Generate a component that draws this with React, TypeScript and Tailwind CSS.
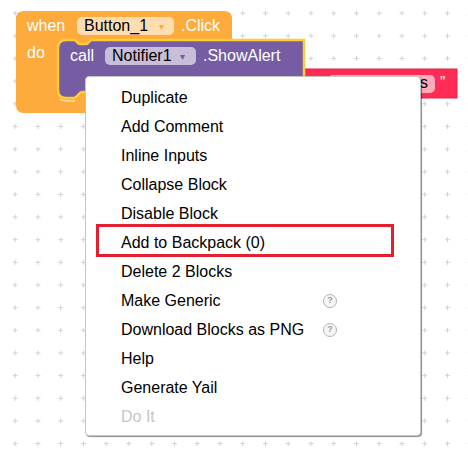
import React from 'react';

const items = [
  { label: 'Duplicate' },
  { label: 'Add Comment' },
  { label: 'Inline Inputs' },
  { label: 'Collapse Block' },
  { label: 'Disable Block' },
  { label: 'Add to Backpack (0)' },
  { label: 'Delete 2 Blocks' },
  { label: 'Make Generic', help: true },
  { label: 'Download Blocks as PNG', help: true },
  { label: 'Help' },
  { label: 'Generate Yail' },
  { label: 'Do It', disabled: true },
];

function Workspace() {
  const font = "'Liberation Sans', Arial, sans-serif";
  return (
    <svg className="absolute inset-0" width={468} height={454} viewBox="0 0 468 454">
      <defs>
        <pattern id="grid" x={3.825} y={1.875} width={22.75} height={22.65} patternUnits="userSpaceOnUse">
          <path d="M8.875 11.325 H13.875 M11.375 8.825 V13.825" stroke="#d2d2d2" strokeWidth={1} />
        </pattern>
      </defs>
      <rect width={468} height={454} fill="url(#grid)" />

      {/* when Button_1.Click */}
      <path
        d="M16 19 Q16 11 24 11 H224 Q232 11 232 19 V40 H130 V113 H24 Q16 113 16 105 Z"
        fill="#fdab3c"
      />
      <text x={27} y={31} fill="#fff" fontSize={16} fontFamily={font}>when</text>
      <rect x={77} y={17} width={97} height={18} rx={5} fill="#fff" fillOpacity={0.6} />
      <text x={84} y={31} fill="#000" fontSize={16} fontFamily={font}>Button_1</text>
      <text x={159} y={30} fill="#fdab3c" fontSize={10} fontFamily={font}>▾</text>
      <text x={181} y={31} fill="#fff" fontSize={16} fontFamily={font}>.Click</text>
      <text x={27} y={58} fill="#fff" fontSize={16} fontFamily={font}>do</text>

      {/* text block */}
      <rect x={304} y={69} width={153} height={29} fill="#ff2d55" stroke="#e0234a" strokeWidth={1} />
      <rect x={328} y={75} width={107} height={18} rx={5} fill="#fff" fillOpacity={0.6} />
      <text x={428} y={88} textAnchor="end" fill="#000" fontSize={16} fontFamily={font}>Hello Notifiers</text>
      <text x={440} y={88} fill="#fff" fontSize={16} fontFamily={font}>”</text>

      {/* call Notifier1.ShowAlert */}
      <path
        d="M58 48 Q58 40 66 40 H74 C77 40 77 44 80 44 H86 C89 44 89 40 92 40 H304 V92 H82 C78 92 78 98 74 98 H66 Q58 98 58 90 Z"
        fill="#765ca3"
        stroke="#ffcc33"
        strokeWidth={2.5}
      />
      <path d="M60 99.5 Q63 101 70 101 H75" stroke="#fff" strokeOpacity={0.8} strokeWidth={1} fill="none" />
      <text x={70} y={60.5} fill="#fff" fontSize={16} fontFamily={font}>call</text>
      <rect x={105} y={47} width={91} height={18} rx={5} fill="#fff" fillOpacity={0.6} />
      <text x={112} y={60.5} fill="#000" fontSize={16} fontFamily={font}>Notifier1</text>
      <text x={180} y={59.5} fill="#765ca3" fontSize={10} fontFamily={font}>▾</text>
      <text x={203} y={60.5} fill="#fff" fontSize={16} fontFamily={font}>.ShowAlert</text>
    </svg>
  );
}

function HelpIcon() {
  return (
    <span className="flex items-center justify-center w-[14px] h-[14px] rounded-full border border-[#b4b4b4] bg-[#f6f6f6] text-[9px] font-bold leading-none text-[#9a9a9a]">
      ?
    </span>
  );
}

export default function App() {
  return (
    <div className="relative w-[468px] h-[454px] overflow-hidden bg-white font-['Liberation_Sans',Arial,sans-serif]">
      <Workspace />

      {/* Context menu */}
      <div className="absolute left-[85px] top-[76px] w-[336px] h-[360px] bg-white border border-[#c4c4c4] rounded-[4px] shadow-[1px_1px_1px_rgba(0,0,0,0.45)] pt-[6px]">
        <ul>
          {items.map((item) => (
            <li
              key={item.label}
              className={`flex items-center h-[29px] pl-[35px] text-[16px] ${
                item.disabled ? 'text-[#c6c6c6]' : 'text-black'
              }`}
            >
              <span className="w-[202px] whitespace-nowrap">{item.label}</span>
              {item.help && <HelpIcon />}
            </li>
          ))}
        </ul>
      </div>

      {/* Highlight */}
      <div className="absolute left-[96px] top-[224px] w-[298px] h-[33px] border-[3px] border-[#e5202e]" />
    </div>
  );
}
